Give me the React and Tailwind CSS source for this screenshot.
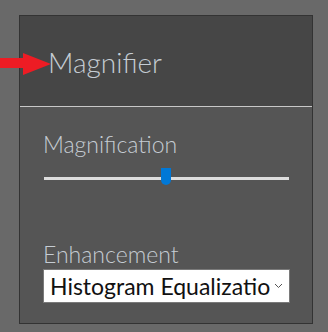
const App = () => {
  return (
    <div className="w-[328px] h-[332px] bg-[#696969] pt-[15px] pl-[19px] relative" style={{ fontFamily: "Lato, 'Open Sans', sans-serif" }}>
      <div className="w-[294px] h-[309px] border border-[#333333] bg-[#555555] flex flex-col">
        <div className="h-[90px] bg-[#464646] flex items-center pl-[28px]">
          <span className="text-[28px] font-light leading-none text-[#c5ccd3] mt-[1px]">Magnifier</span>
        </div>
        <div className="h-[1px] bg-[#c8c8c8]" />
        <div className="flex flex-col px-[23px] pt-[26px]">
          <span className="text-[23px] font-light leading-none text-[#c5ccd3]">Magnification</span>
          <div className="relative mt-[12px] h-[17px] w-[245px] ml-[1px]">
            <div className="absolute left-0 right-0 top-[9px] h-[3px] bg-[#dddddd]" />
            <div className="absolute left-[117px] top-0 w-[10px] h-[17px] bg-[#0078d7] rounded-b-[5px]" />
          </div>
          <span className="mt-[58px] text-[23px] font-light leading-none text-[#c5ccd3]">Enhancement</span>
          <div className="mt-[3px] w-[247px] h-[34px] bg-white border border-[#7a7a7a] flex items-center pl-[6px] pr-[6px]">
            <span className="flex-1 text-[23px] leading-none text-[#111111] whitespace-nowrap">Histogram Equalizatio</span>
            <svg width="9" height="6" viewBox="0 0 9 6" className="ml-[2px]">
              <path d="M1 1 L4.5 4.5 L8 1" fill="none" stroke="#555" strokeWidth="1" />
            </svg>
          </div>
        </div>
      </div>
      <svg className="absolute left-0 top-[53px]" width="51" height="23" viewBox="0 0 51 23">
        <polygon points="0,5 23,5 23,0 51,11 23,22 23,15 0,15" fill="#ed1c24" />
      </svg>
    </div>
  );
};

export default App;
